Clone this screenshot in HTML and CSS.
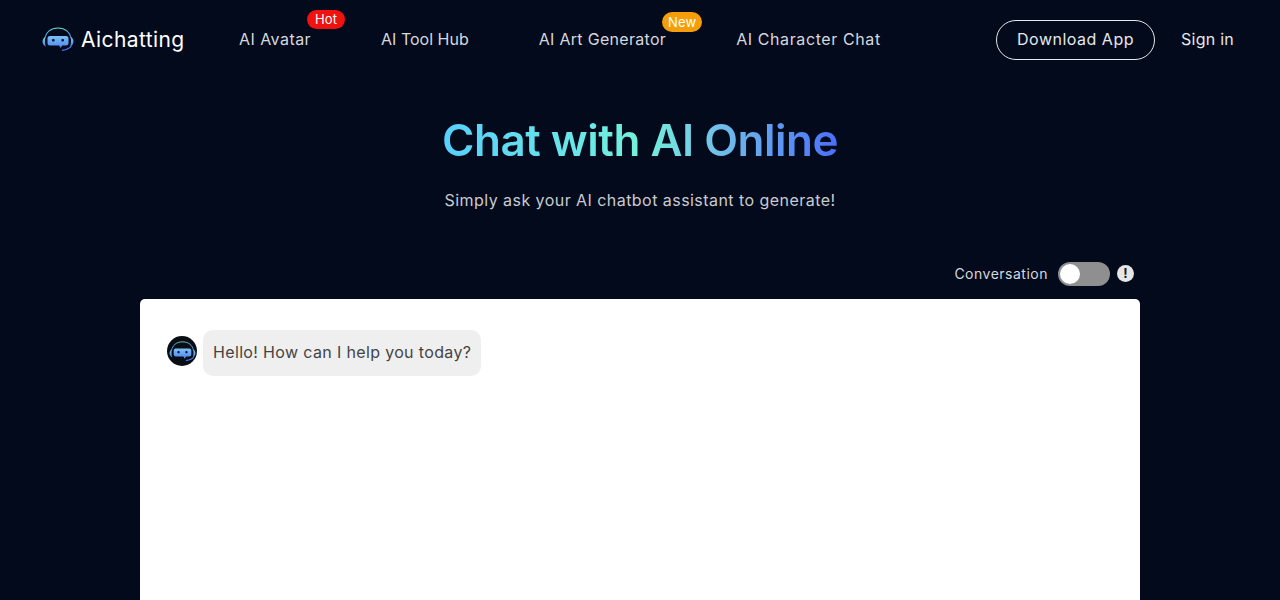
FILE: index.html
```html
<!DOCTYPE html>
<html lang="en">
<head>
  <meta charset="UTF-8">
  <meta name="viewport" content="width=device-width, initial-scale=1.0">
  <title>Chat with AI Online</title>
  <link rel="stylesheet" href="styles.css">
</head>
<body>
  <svg class="defs" width="0" height="0" aria-hidden="true">
    <defs>
      <linearGradient id="botLine" x1="0" y1="0" x2="0" y2="1">
        <stop offset="0" stop-color="#5fd6c8"/>
        <stop offset="0.55" stop-color="#5aa8ee"/>
        <stop offset="1" stop-color="#4a78f0"/>
      </linearGradient>
      <linearGradient id="botFace" x1="0" y1="0" x2="0" y2="1">
        <stop offset="0" stop-color="#7cc0f6"/>
        <stop offset="1" stop-color="#4c86ee"/>
      </linearGradient>
      <symbol id="bot" viewBox="0 0 32 25">
        <path d="M3 11.500C3.800 5 9 1 16 1s12.200 4 13 10.500" fill="none" stroke="url(#botLine)" stroke-width="1.100"/>
        <path d="M3.400 9.500C1.300 11 .4 13 .6 15s1.300 3.800 3.200 4.700c-1-3.400-1.100-7-.4-10.200z" fill="url(#botLine)"/>
        <path d="M28.600 9.500c2.100 1.500 3 3.500 2.800 5.500s-1.300 3.800-3.200 4.700c1-3.400 1.100-7 .4-10.200z" fill="url(#botLine)"/>
        <path d="M29.500 18.500c-1.600 2.900-4.800 4.400-9.500 4.900" fill="none" stroke="#4a78f0" stroke-width="1.300"/>
        <path d="M8 9h16a2.500 2.500 0 0 1 2.500 2.500v4.500a2.500 2.500 0 0 1-2.500 2.500h-3.800l-1.500 2.600-1.500-2.600H8a2.500 2.500 0 0 1-2.500-2.500v-4.500A2.500 2.500 0 0 1 8 9z" fill="url(#botFace)"/>
        <rect x="10" y="12" width="2.600" height="2.600" rx="1" fill="#06122c"/>
        <rect x="19.400" y="12" width="2.600" height="2.600" rx="1" fill="#06122c"/>
      </symbol>
    </defs>
  </svg>

  <header class="topbar">
    <a class="logo" href="#">
      <svg class="logo-icon"><use href="#bot"/></svg>
      <span class="logo-text">Aichatting</span>
    </a>
    <nav class="menu">
      <a class="menu-item menu-avatar" href="#">AI Avatar<span class="tag tag-hot">Hot</span></a>
      <a class="menu-item menu-hub" href="#">AI Tool Hub</a>
      <a class="menu-item menu-art" href="#">AI Art Generator<span class="tag tag-new">New</span></a>
      <a class="menu-item menu-char" href="#">AI Character Chat</a>
    </nav>
    <div class="actions">
      <a class="btn-download" href="#">Download App</a>
      <a class="signin" href="#">Sign in</a>
    </div>
  </header>

  <main class="page">
    <h1 class="title">Chat with AI Online</h1>
    <p class="subtitle">Simply ask your AI chatbot assistant to generate!</p>

    <div class="conv-row">
      <span class="conv-label">Conversation</span>
      <span class="switch"><span class="knob"></span></span>
      <span class="info">!</span>
    </div>

    <section class="chat">
      <div class="msg">
        <span class="avatar"><svg class="avatar-icon"><use href="#bot"/></svg></span>
        <p class="bubble">Hello! How can I help you today?</p>
      </div>
    </section>
  </main>
</body>
</html>
```

FILE: styles.css
```css
* {
  margin: 0;
  padding: 0;
  box-sizing: border-box;
}

html, body {
  height: 600px;
  overflow: hidden;
}

body {
  background: #030a1c;
  font-family: Inter, "Liberation Sans", sans-serif;
  color: #fff;
}

a {
  color: inherit;
  text-decoration: none;
}

.defs {
  display: block;
}

/* top bar */
.topbar {
  display: flex;
  align-items: center;
  height: 79px;
  padding: 0 46px 0 42px;
}

.logo {
  display: flex;
  align-items: center;
  gap: 7px;
  font-size: 21px;
  letter-spacing: 0.4px;
  width: 197px;
}

.logo-icon {
  width: 32px;
  height: 25px;
}

.logo-text {
  padding-bottom: 1px;
}

.menu {
  display: flex;
  gap: 70px;
  flex: 1;
  padding-bottom: 2px;
}

.menu-item {
  position: relative;
  font-size: 16px;
  color: #d6d8dd;
}

.menu-avatar {
  letter-spacing: 0.45px;
}

.menu-art {
  letter-spacing: 0.3px;
}

.menu-char {
  letter-spacing: 0.6px;
}

.tag {
  position: absolute;
  height: 20px;
  line-height: 20px;
  border-radius: 10px;
  font-size: 13px;
  letter-spacing: 0.2px;
  text-align: center;
  color: #fff;
}

.tag-hot {
  top: -19px;
  right: -34px;
  width: 38px;
  height: 19px;
  line-height: 19px;
  background: #f01111;
}

.tag-new {
  top: -17px;
  right: -36px;
  width: 40px;
  background: #f59e0b;
}

.actions {
  display: flex;
  align-items: center;
  gap: 26px;
}

.btn-download {
  display: block;
  width: 159px;
  height: 40px;
  line-height: 36px;
  text-align: center;
  border: 1px solid #e8e8e8;
  border-radius: 20px;
  font-size: 16px;
  letter-spacing: 0.5px;
  color: #e6e7ea;
}

.signin {
  padding-bottom: 2px;
  font-size: 16px;
  letter-spacing: 0.25px;
  color: #e6e7ea;
}

/* main area */
.page {
  display: flex;
  flex-direction: column;
  align-items: center;
}

.title {
  margin-top: 32px;
  font-size: 44px;
  line-height: 58px;
  font-weight: 600;
  letter-spacing: -0.5px;
  background: linear-gradient(90deg, #57cffc 0%, #72f2dc 50%, #72c4e8 68%, #4b6ffa 100%);
  -webkit-background-clip: text;
  background-clip: text;
  color: transparent;
}

.subtitle {
  margin-top: 20px;
  font-size: 16px;
  line-height: 22px;
  letter-spacing: 0.45px;
  color: #c9cbd1;
}

.conv-row {
  display: flex;
  align-items: center;
  align-self: flex-end;
  height: 26px;
  margin: 50px 146px 0 0;
}

.conv-label {
  padding-bottom: 2px;
  font-size: 14px;
  letter-spacing: 0.5px;
  color: #d6d8dd;
}

.switch {
  display: flex;
  align-items: center;
  width: 52px;
  height: 24px;
  margin-left: 10px;
  padding: 0 2px;
  border-radius: 12px;
  background: #8f8f8f;
}

.knob {
  width: 20px;
  height: 20px;
  border-radius: 50%;
  background: #fff;
}

.info {
  width: 17px;
  height: 17px;
  margin-left: 7px;
  margin-bottom: 1px;
  border-radius: 50%;
  background: #e6e6e6;
  color: #14171f;
  font-size: 13px;
  font-weight: 700;
  line-height: 17px;
  text-align: center;
}

.chat {
  width: 1000px;
  height: 320px;
  margin-top: 12px;
  padding: 31px 27px;
  background: #fff;
  border-radius: 5px 5px 0 0;
}

.msg {
  display: flex;
  align-items: flex-start;
  gap: 6px;
}

.avatar {
  display: flex;
  align-items: center;
  justify-content: center;
  width: 30px;
  height: 30px;
  margin-top: 6px;
  border-radius: 50%;
  background: #0a0d14;
}

.avatar-icon {
  width: 27px;
  height: 21px;
}

.bubble {
  padding: 11px 10px 13px;
  border-radius: 10px;
  background: #efefef;
  font-size: 16px;
  line-height: 22px;
  letter-spacing: 0.35px;
  color: #444;
}
```
